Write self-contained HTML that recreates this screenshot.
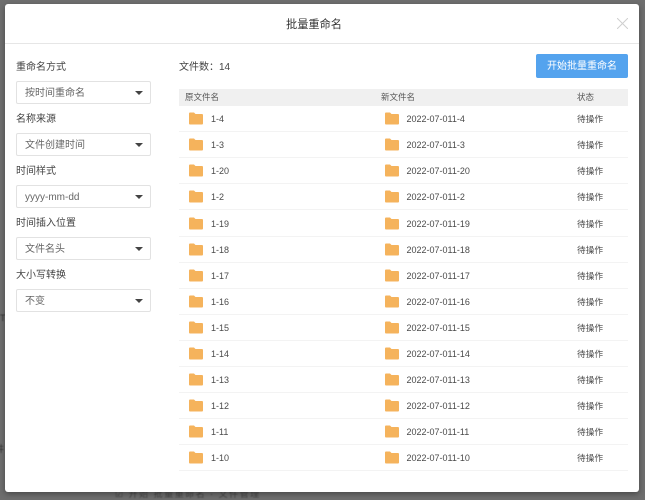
<!DOCTYPE html>
<html lang="zh"><head><meta charset="utf-8"><title>批量重命名</title>
<style>
*{box-sizing:border-box}
html,body{margin:0;padding:0;width:645px;height:500px;overflow:hidden;background:#6e6e6e;font-family:"Liberation Sans","Noto Sans CJK SC",sans-serif;color:#444}
.modal{position:absolute;left:5px;top:4px;width:634px;height:488px;background:#fff;border-radius:3px;box-shadow:0 2px 6px rgba(0,0,0,.35);filter:blur(.3px)}
.a{position:absolute;white-space:nowrap}
.title{left:-8px;width:634px;top:12px;text-align:center;font-size:11.2px;line-height:18px;color:#333}
.hr{left:0;top:39px;width:634px;height:1px;background:#e6e6e6}
.lb{left:11px;font-size:10px;line-height:16px;color:#444;margin-top:1.5px}
.sel{left:11px;width:135px;height:23px;border:1px solid #e2e2e2;border-radius:2px;background:#fff;font-size:10px;line-height:23.5px;padding-left:8px;color:#666}
.sel:after{content:"";position:absolute;right:7px;top:9px;border-left:4px solid transparent;border-right:4px solid transparent;border-top:4px solid #444}
.btn{left:531px;top:50px;width:92px;height:24px;background:#54a3ee;border-radius:2px;color:#fff;font-size:10px;line-height:26px;text-align:center}
.thead{left:174px;top:85px;width:449px;height:17px;background:#f0f0f0}
.th{top:85px;font-size:8.5px;line-height:17px;color:#555}
.row{left:174px;width:449px;height:26px;border-bottom:1px solid #f3f3f3}
.f{position:absolute;top:6px;width:14px;height:13px}
.t{position:absolute;top:0;font-size:9px;line-height:26px;color:#4a4a4a;white-space:nowrap}
.s{font-size:8.700px}
.n1{left:32px}.f1{left:10px}.f2{left:206px}.n2{left:227.500px}.s{left:398px}
.bg{position:absolute;font-size:9px;color:#333;white-space:nowrap;filter:blur(.4px)}
</style></head><body>
<svg width="0" height="0" style="position:absolute"><defs><symbol id="d" viewBox="0 0 14 13"><path d="M0 1.5Q0 .5 1 .5H5L6.5 2H13Q14 2 14 3V11.500Q14 12.500 13 12.500H1Q0 12.500 0 11.500Z" fill="#f5b35c"/></symbol></defs></svg>
<div class="bg" style="left:0;top:313px">T</div>
<div class="bg" style="left:-5px;top:442px">井</div>
<div class="bg" style="left:115px;top:487px;color:#444;letter-spacing:1.500px">☑ 开始 批量重命名 · 文件管理</div>
<div class="modal">
<div class="a title">批量重命名</div>
<svg class="a" style="left:612px;top:14px" width="11" height="11" viewBox="0 0 11 11"><path d="M0 0L11 11M11 0L0 11" stroke="#cfcfcf" stroke-width="1" fill="none"/></svg>
<div class="a hr"></div>
<div class="a lb" style="top:54px">重命名方式</div><div class="a sel" style="top:77px">按时间重命名</div>
<div class="a lb" style="top:106px">名称来源</div><div class="a sel" style="top:129px">文件创建时间</div>
<div class="a lb" style="top:158px">时间样式</div><div class="a sel" style="top:181px">yyyy-mm-dd</div>
<div class="a lb" style="top:210px">时间插入位置</div><div class="a sel" style="top:233px">文件名头</div>
<div class="a lb" style="top:262px">大小写转换</div><div class="a sel" style="top:285px">不变</div>
<div class="a lb" style="left:174px;top:54px">文件数：14</div>
<div class="a btn">开始批量重命名</div>
<div class="a thead"></div>
<div class="a th" style="left:180px">原文件名</div>
<div class="a th" style="left:376px">新文件名</div>
<div class="a th" style="left:572px">状态</div>
<div class="a row" style="top:102px"><svg class="f f1"><use href="#d"/></svg><span class="t n1">1-4</span><svg class="f f2"><use href="#d"/></svg><span class="t n2">2022-07-011-4</span><span class="t s">待操作</span></div>
<div class="a row" style="top:128px"><svg class="f f1"><use href="#d"/></svg><span class="t n1">1-3</span><svg class="f f2"><use href="#d"/></svg><span class="t n2">2022-07-011-3</span><span class="t s">待操作</span></div>
<div class="a row" style="top:154px"><svg class="f f1"><use href="#d"/></svg><span class="t n1">1-20</span><svg class="f f2"><use href="#d"/></svg><span class="t n2">2022-07-011-20</span><span class="t s">待操作</span></div>
<div class="a row" style="top:180px"><svg class="f f1"><use href="#d"/></svg><span class="t n1">1-2</span><svg class="f f2"><use href="#d"/></svg><span class="t n2">2022-07-011-2</span><span class="t s">待操作</span></div>
<div class="a row" style="top:207px"><svg class="f f1"><use href="#d"/></svg><span class="t n1">1-19</span><svg class="f f2"><use href="#d"/></svg><span class="t n2">2022-07-011-19</span><span class="t s">待操作</span></div>
<div class="a row" style="top:233px"><svg class="f f1"><use href="#d"/></svg><span class="t n1">1-18</span><svg class="f f2"><use href="#d"/></svg><span class="t n2">2022-07-011-18</span><span class="t s">待操作</span></div>
<div class="a row" style="top:259px"><svg class="f f1"><use href="#d"/></svg><span class="t n1">1-17</span><svg class="f f2"><use href="#d"/></svg><span class="t n2">2022-07-011-17</span><span class="t s">待操作</span></div>
<div class="a row" style="top:285px"><svg class="f f1"><use href="#d"/></svg><span class="t n1">1-16</span><svg class="f f2"><use href="#d"/></svg><span class="t n2">2022-07-011-16</span><span class="t s">待操作</span></div>
<div class="a row" style="top:311px"><svg class="f f1"><use href="#d"/></svg><span class="t n1">1-15</span><svg class="f f2"><use href="#d"/></svg><span class="t n2">2022-07-011-15</span><span class="t s">待操作</span></div>
<div class="a row" style="top:337px"><svg class="f f1"><use href="#d"/></svg><span class="t n1">1-14</span><svg class="f f2"><use href="#d"/></svg><span class="t n2">2022-07-011-14</span><span class="t s">待操作</span></div>
<div class="a row" style="top:363px"><svg class="f f1"><use href="#d"/></svg><span class="t n1">1-13</span><svg class="f f2"><use href="#d"/></svg><span class="t n2">2022-07-011-13</span><span class="t s">待操作</span></div>
<div class="a row" style="top:389px"><svg class="f f1"><use href="#d"/></svg><span class="t n1">1-12</span><svg class="f f2"><use href="#d"/></svg><span class="t n2">2022-07-011-12</span><span class="t s">待操作</span></div>
<div class="a row" style="top:415px"><svg class="f f1"><use href="#d"/></svg><span class="t n1">1-11</span><svg class="f f2"><use href="#d"/></svg><span class="t n2">2022-07-011-11</span><span class="t s">待操作</span></div>
<div class="a row" style="top:441px"><svg class="f f1"><use href="#d"/></svg><span class="t n1">1-10</span><svg class="f f2"><use href="#d"/></svg><span class="t n2">2022-07-011-10</span><span class="t s">待操作</span></div>
</div>
</body></html>
